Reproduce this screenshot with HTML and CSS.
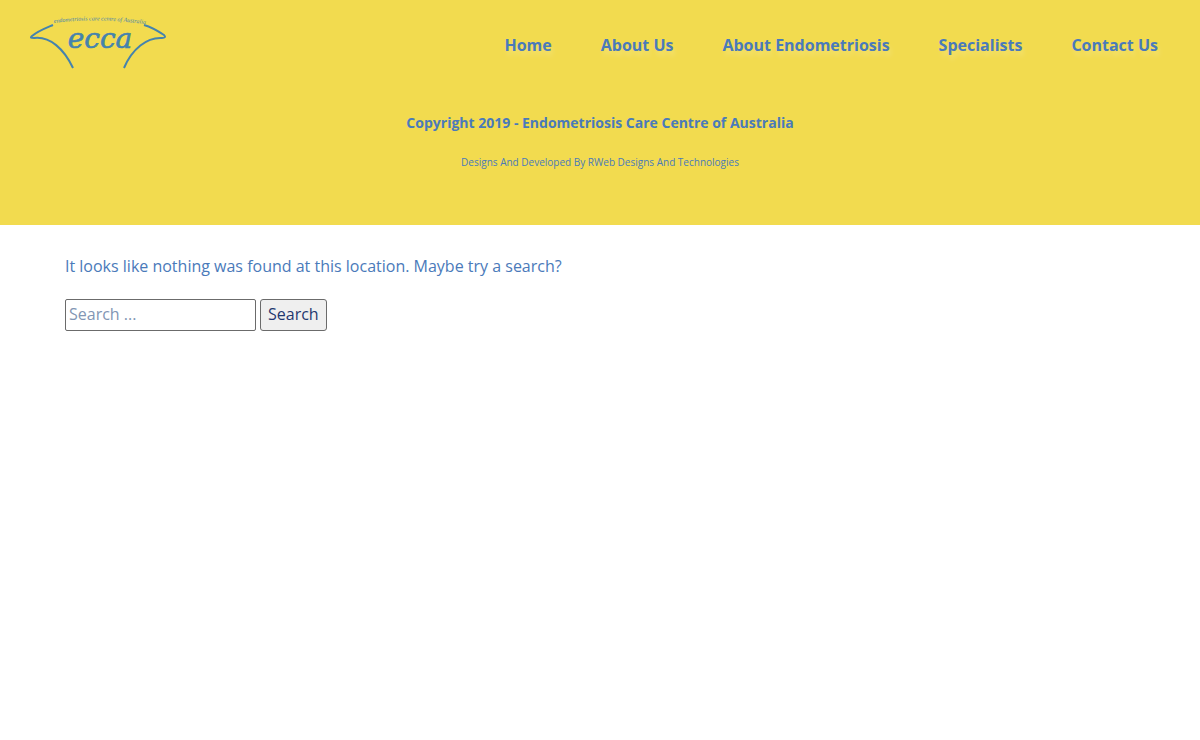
FILE: index.html
```
<!DOCTYPE html>
<html lang="en">
<head>
  <meta charset="UTF-8">
  <meta name="viewport" content="width=device-width, initial-scale=1.0">
  <title>Page not found - Endometriosis Care Centre of Australia</title>
  <link rel="stylesheet" href="styles.css">
</head>
<body>
  <div class="banner">
    <!-- Logo and main menu -->
    <header class="site-header">
      <a class="logo" href="#" aria-label="ecca home">
        <svg width="138" height="70" viewBox="0 0 138 70">
          <path class="logo-line" d="M24 15 C17 18 9 21 3 26 C1 28 2 28 5 28 C21 26 35 39 44 58"/>
          <path class="logo-line" d="M115 15 C122 17 129 21 135 25 C137 27 136 28 133 28 C118 27 103 39 95 58"/>
          <path id="arc" fill="none" d="M25 13 Q72 7 122 15"/>
          <text class="logo-tagline"><textPath href="#arc">endometriosis care centre of Australia</textPath></text>
          <text class="logo-name" x="71" y="38" text-anchor="middle">ecca</text>
        </svg>
      </a>
      <nav class="main-nav">
        <a href="#">Home</a>
        <a href="#">About Us</a>
        <a href="#">About Endometriosis</a>
        <a href="#">Specialists</a>
        <a href="#">Contact Us</a>
      </nav>
    </header>

    <!-- Copyright -->
    <footer class="site-footer">
      <p class="copyright">Copyright 2019 - Endometriosis Care Centre of Australia</p>
      <p class="credits">Designs And Developed By RWeb Designs And Technologies</p>
    </footer>
  </div>

  <main class="content">
    <p>It looks like nothing was found at this location. Maybe try a search?</p>
    <form class="search-form" role="search">
      <input type="search" class="search-field" placeholder="Search ..." aria-label="Search for">
      <button type="submit" class="search-submit">Search</button>
    </form>
  </main>
</body>
</html>
```
FILE: styles.css
```
/* General Styling */
body {
  margin: 0;
  font-family: "Open Sans", sans-serif;
  font-size: 16px;
  line-height: 24px;
  color: #4a7aba;
  background-color: #fff;
}

.banner {
  background-color: #f2db4f;
  padding-bottom: 51px;
}

/* Header */
.site-header {
  display: flex;
  justify-content: space-between;
  align-items: center;
  height: 90px;
  padding: 0 42px 0 29px;
}

.logo {
  display: block;
  height: 70px;
}

.logo-line {
  fill: none;
  stroke: #4583ad;
  stroke-width: 2;
}

.logo-name,
.logo-tagline {
  fill: #4583ad;
  font-style: italic;
}

.logo-name {
  font-family: "DejaVu Serif", serif;
  font-size: 28px;
  stroke: #4583ad;
  stroke-width: 0.6;
}

.logo-tagline {
  font-family: "Liberation Serif", serif;
  font-size: 6px;
}

.main-nav {
  display: flex;
  gap: 49px;
}

.main-nav a {
  color: #4a7aba;
  font-weight: 700;
  text-decoration: none;
  text-shadow: 2px 5px 5px rgba(255, 255, 255, 0.2);
}

/* Footer */
.site-footer {
  padding-top: 21px;
  text-align: center;
}

.site-footer p {
  margin: 0;
}

.copyright {
  font-size: 14px;
  font-weight: 700;
}

.site-footer .credits {
  margin-top: 15px;
  font-size: 10px;
}

/* Not found message and search */
.content {
  padding: 29px 65px;
}

.content p {
  margin: 0 0 21px;
}

.search-form {
  display: flex;
  gap: 4px;
}

.search-field,
.search-submit {
  box-sizing: border-box;
  height: 32px;
  border: 1px solid #6b6b6b;
  border-radius: 3px;
  font: inherit;
}

.search-field {
  width: 191px;
  padding: 0 3px 2px;
  border-radius: 2px;
  background-color: #fff;
  color: #1f3870;
}

.search-field::placeholder {
  color: #8296b4;
}

.search-submit {
  padding: 0 7px 2px;
  background-color: #efefef;
  color: #1f3870;
}
```
